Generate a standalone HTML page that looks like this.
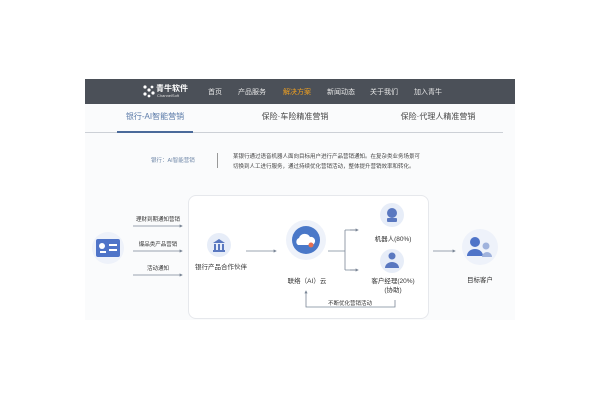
<!DOCTYPE html>
<html><head><meta charset="utf-8"><style>
*{margin:0;padding:0;box-sizing:border-box}
body{width:600px;height:400px;background:#fff;position:relative;overflow:hidden;font-family:"Liberation Sans","Noto Sans CJK SC",sans-serif}
.a{position:absolute;white-space:nowrap}
.c{transform:translateX(-50%)}
</style></head><body>
<div class="a" style="left:85px;top:79px;width:430px;height:241px;background:#fafbfc"></div>
<div class="a" style="left:85px;top:79px;width:430px;height:25px;background:#4b5058"></div>
<!-- logo -->
<svg class="a" style="left:142px;top:84px" width="14" height="14" viewBox="0 0 14 14"><g fill="#fff"><circle cx="3" cy="3" r="1.6"/><circle cx="7" cy="6" r="1.6"/><circle cx="11" cy="9" r="1.6"/><circle cx="3" cy="10" r="1.6"/><circle cx="7" cy="12" r="1.4"/><circle cx="10" cy="3" r="1.4"/></g></svg>
<div class="a" style="left:156px;top:83px;font-size:8px;color:#fff;font-weight:bold">青牛软件</div>
<div class="a" style="left:157px;top:93px;font-size:4px;color:#ddd">ChannelSoft</div>
<div class="a" style="top:87px;font-size:7px;color:#e6e6e6;left:208px">首页</div>
<div class="a" style="top:87px;font-size:7px;color:#e6e6e6;left:238px">产品服务</div>
<div class="a" style="top:87px;font-size:7px;color:#f0a020;left:283px">解决方案</div>
<div class="a" style="top:87px;font-size:7px;color:#e6e6e6;left:327px">新闻动态</div>
<div class="a" style="top:87px;font-size:7px;color:#e6e6e6;left:370px">关于我们</div>
<div class="a" style="top:87px;font-size:7px;color:#e6e6e6;left:414px">加入青牛</div>
<!-- tabs -->
<div class="a c" style="left:155px;top:111px;font-size:8px;color:#5a7aa8">银行-AI智能营销</div>
<div class="a c" style="left:295px;top:111px;font-size:8px;color:#444">保险·车险精准营销</div>
<div class="a c" style="left:438px;top:111px;font-size:8px;color:#444">保险·代理人精准营销</div>
<div class="a" style="left:85px;top:132px;width:418px;height:1px;background:#ccd0d6"></div>
<div class="a" style="left:117px;top:131px;width:76px;height:2px;background:#4a6a9a"></div>
<!-- desc -->
<div class="a" style="left:151px;top:156px;font-size:5.5px;color:#7088a8">银行：AI智能营销</div>
<div class="a" style="left:217px;top:153px;width:1px;height:15px;background:#999"></div>
<div class="a" style="left:233px;top:152px;font-size:5.5px;color:#444;line-height:10px">某银行通过语音机器人面向目标用户进行产品营销通知。在复杂类业务场景可<br>切换到人工进行服务，通过持续优化营销活动，整体提升营销效率和转化。</div>
<!-- diagram box -->
<div class="a" style="left:188px;top:195px;width:241px;height:124px;background:#fff;border:1px solid #e6e8ec;border-radius:8px"></div>
<svg class="a" style="left:0;top:0" width="600" height="400">
<defs><marker id="m" markerWidth="4" markerHeight="4" refX="3" refY="2" orient="auto"><path d="M0,0L4,2L0,4z" fill="#7a8696"/></marker></defs>
<g stroke="#7a8696" stroke-width="0.8" fill="none">
<line x1="133" y1="226" x2="182" y2="226" marker-end="url(#m)"/>
<line x1="133" y1="251" x2="182" y2="251" marker-end="url(#m)"/>
<line x1="133" y1="275" x2="182" y2="275" marker-end="url(#m)"/>
<line x1="246" y1="251" x2="276" y2="251" marker-end="url(#m)"/>
<path d="M328 251H345M345 230V270M345 230H358M345 270H358" /><line x1="350" y1="230" x2="358" y2="230" marker-end="url(#m)"/><line x1="350" y1="270" x2="358" y2="270" marker-end="url(#m)"/>
<path d="M395 300V307H306V291" marker-end="url(#m)"/>
<line x1="433" y1="251" x2="455" y2="251" marker-end="url(#m)"/>
</g>
<circle cx="108" cy="248" r="16" fill="#eef2fa"/>
<rect x="96" y="239" width="24" height="18" rx="2" fill="#4f74c8"/><circle cx="102" cy="246" r="3" fill="#fff"/><rect x="100" y="251" width="6" height="2" fill="#fff"/><rect x="109" y="244" width="8" height="2" fill="#fff"/><rect x="109" y="249" width="8" height="2" fill="#fff"/>
<circle cx="219" cy="245" r="12" fill="#e7edf8"/>
<path d="M213 243L219 239L225 243Z M213 250H225V252H213Z" fill="#5a78c0"/><rect x="214" y="244" width="2" height="6" fill="#5a78c0"/><rect x="218" y="244" width="2" height="6" fill="#5a78c0"/><rect x="222" y="244" width="2" height="6" fill="#5a78c0"/>
<circle cx="306" cy="240" r="20" fill="#eef2fa"/>
<circle cx="306" cy="240" r="14" fill="#4a78c8"/>
<path d="M298 245a4 4 0 0 1 1-7a6 6 0 0 1 11-1a4 4 0 0 1 2 8z" fill="#fff"/><circle cx="311" cy="245" r="2.5" fill="#e87050"/>
<circle cx="392" cy="215" r="12" fill="#e7edf8"/>
<circle cx="392" cy="213" r="5" fill="#5a78c0"/><rect x="387" y="218" width="10" height="4" rx="1" fill="#5a78c0"/>
<circle cx="392" cy="261" r="12" fill="#e7edf8"/>
<circle cx="392" cy="256" r="3.5" fill="#5a78c0"/><path d="M385 268a7 6 0 0 1 14 0z" fill="#5a78c0"/>
<circle cx="480" cy="247" r="18" fill="#eef2fa"/>
<circle cx="475" cy="242" r="5" fill="#4f74c8"/><path d="M467 256a8 7 0 0 1 16 0z" fill="#4f74c8"/><circle cx="486" cy="246" r="3.5" fill="#9fb2dc"/><path d="M482 257a5 5 0 0 1 10 0z" fill="#9fb2dc"/>
</svg>
<div class="a c" style="left:158px;top:215px;font-size:5.5px;color:#333">理财到期通知营销</div>
<div class="a c" style="left:158px;top:240px;font-size:5.5px;color:#333">爆品类产品营销</div>
<div class="a c" style="left:158px;top:264px;font-size:5.5px;color:#333">活动通知</div>
<div class="a c" style="left:221px;top:261px;font-size:6.5px;color:#333">银行产品合作伙伴</div>
<div class="a c" style="left:307px;top:275px;font-size:6.5px;color:#333">联络（AI）云</div>
<div class="a c" style="left:393px;top:233px;font-size:6.5px;color:#333">机器人(80%)</div>
<div class="a c" style="left:393px;top:277px;font-size:6.5px;color:#333;text-align:center;line-height:9px">客户经理(20%)<br>(协助)</div>
<div class="a c" style="left:350px;top:299px;font-size:5.5px;color:#333">不断优化营销活动</div>
<div class="a c" style="left:480px;top:274px;font-size:6.5px;color:#333">目标客户</div>
</body></html>
